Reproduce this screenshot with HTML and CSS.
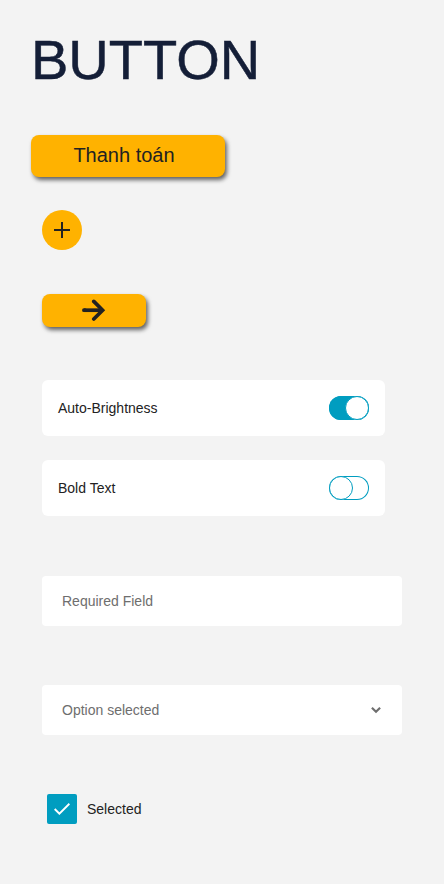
FILE: index.html
```
<!DOCTYPE html>
<html lang="vi">
<head>
<meta charset="utf-8">
<title>Button</title>
<link rel="stylesheet" href="styles.css">
</head>
<body>
<main class="page">
  <h1 class="title">BUTTON</h1>
  <button class="button button-pay">Thanh toán</button>
  <button class="button-round" aria-label="Add">
    <svg width="16" height="16" viewBox="0 0 16 16"><path d="M8 0v16M0 8h16" stroke="#222" stroke-width="2"/></svg>
  </button>
  <button class="button button-next" aria-label="Next">
    <svg width="24" height="23" viewBox="0 0 24 23" fill="none" stroke="#222" stroke-width="3.7" stroke-linecap="round"><path d="M2.2 11.2h18" stroke-linecap="butt" /><path d="M1.9 11.2h1M11.8 2.4l8.8 8.8-8.8 8.8"/></svg>
  </button>
  <div class="settings">
    <div class="setting"><span>Auto-Brightness</span><span class="switch switch-on"><span class="knob"></span></span></div>
    <div class="setting"><span>Bold Text</span><span class="switch"><span class="knob"></span></span></div>
  </div>
  <div class="field">Required Field</div>
  <div class="field select"><span>Option selected</span>
    <svg width="10" height="8" viewBox="0 0 10 8" fill="none" stroke="#6e6e6e" stroke-width="2.2"><path d="M.9 1.8L5 5.7l4.1-3.9"/></svg>
  </div>
  <div class="check-row">
    <span class="checkbox"><svg width="16" height="12" viewBox="0 0 16 12" fill="none" stroke="#fff" stroke-width="1.9"><path d="M.7 6l4.7 4.7L15.4.8"/></svg></span>
    <span>Selected</span>
  </div>
</main>
</body>
</html>
```
FILE: styles.css
```
* { box-sizing: border-box; }
body {
  margin: 0;
  background: #f3f3f3;
  color: #222;
  font: 14px/20px "Liberation Sans", Arial, sans-serif;
}
.page {
  display: flex;
  flex-direction: column;
  align-items: flex-start;
  height: 884px;
  padding: 28px 42px 0;
}
.title {
  margin: 0 0 43px -11px;
  font-size: 56px;
  font-weight: 400;
  line-height: 64px;
  color: #141e37;
  -webkit-text-stroke: .5px #141e37;
}
button {
  display: flex;
  align-items: center;
  justify-content: center;
  padding: 0;
  border: 0;
  background: #ffb200;
  color: #222;
  font-family: inherit;
}
svg { display: block; flex: none; }
.button {
  border-radius: 8px;
  box-shadow: 2px 3px 4px rgba(0, 0, 0, .6);
}
.button-pay {
  width: 194px;
  height: 42px;
  margin-left: -11px;
  padding: 0 8px 2px 0;
  font-size: 20px;
  line-height: 24px;
}
.button-round {
  width: 40px;
  height: 40px;
  margin-top: 33px;
  border-radius: 50%;
}
.button-next {
  width: 104px;
  height: 33px;
  margin-top: 44px;
}
.settings {
  display: grid;
  gap: 24px;
  width: 343px;
  margin-top: 53px;
}
.setting {
  display: flex;
  align-items: center;
  justify-content: space-between;
  height: 56px;
  padding: 0 16px;
  border-radius: 6px;
  background: #fff;
}
.switch {
  display: flex;
  width: 40px;
  height: 24px;
  border-radius: 12px;
  background: #fff;
  box-shadow: inset 0 0 0 1px #009dc0;
}
.switch-on {
  justify-content: flex-end;
  background: #009dc0;
}
.knob {
  width: 24px;
  height: 24px;
  border: 1px solid #009dc0;
  border-radius: 50%;
  background: #fff;
}
.field {
  width: 360px;
  height: 50px;
  margin-top: 60px;
  padding: 15px 20px;
  border-radius: 4px;
  background: #fff;
  color: #6e6e6e;
}
.select {
  display: flex;
  align-items: center;
  justify-content: space-between;
  margin-top: 59px;
  padding-right: 21px;
}
.check-row {
  display: flex;
  align-items: center;
  gap: 10px;
  margin: 59px 0 0 5px;
}
.checkbox {
  display: flex;
  align-items: center;
  justify-content: center;
  width: 30px;
  height: 30px;
  border-radius: 2px;
  background: #009dc0;
}
```
